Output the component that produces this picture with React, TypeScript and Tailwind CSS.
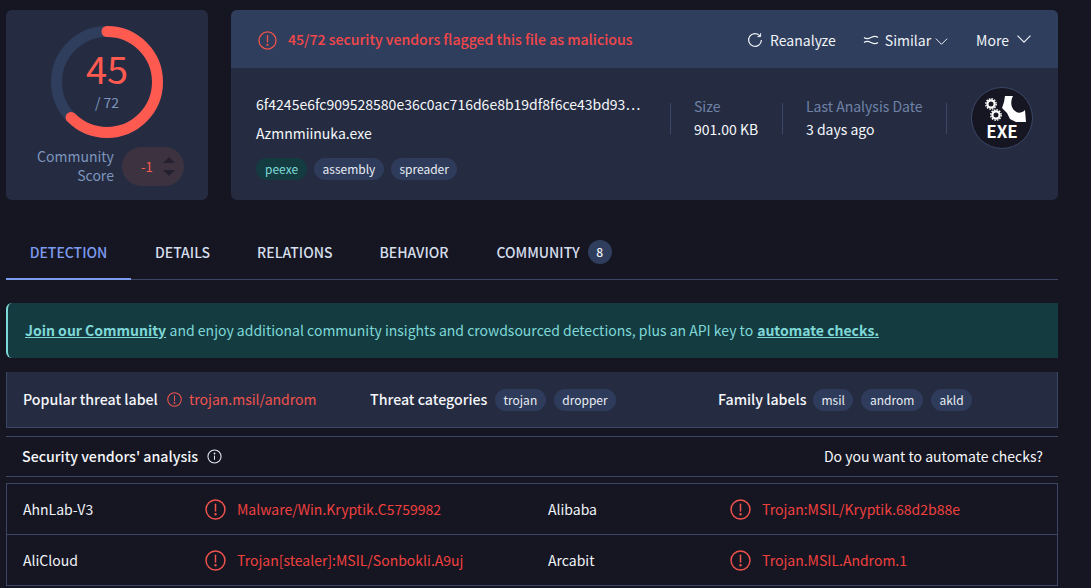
const font = { fontFamily: '"Noto Sans CJK JP", "Noto Sans", sans-serif' };

function AlertIcon({ className }: { className: string }) {
  return (
    <svg viewBox="0 0 20 20" fill="none" stroke="currentColor" strokeWidth="1.4" className={className}>
      <circle cx="10" cy="10" r="9" />
      <path d="M10 5v6.5" strokeLinecap="round" />
      <circle cx="10" cy="14.6" r="0.5" fill="currentColor" />
    </svg>
  );
}

function Chevron({ className }: { className: string }) {
  return (
    <svg viewBox="0 0 14 8" fill="none" stroke="currentColor" strokeWidth="1.1" className={className}>
      <path d="M0.5 0.7 7 7.2l6.5-6.5" />
    </svg>
  );
}

function Pill({ label, green }: { label: string; green?: boolean }) {
  return (
    <span
      className={`inline-flex h-[22px] items-center rounded-full text-[12px] leading-none ${
        green ? 'bg-[#143c40] px-[9px] text-[#7fd8d8]' : 'bg-[#2e3b5a] px-[8.5px] text-[#e8edf5]'
      }`}
    >
      {label}
    </span>
  );
}

function Gauge() {
  const r = 50.5;
  const c = 2 * Math.PI * r;
  return (
    <div className="relative mx-auto h-[112px] w-[112px]">
      <svg viewBox="0 0 112 112" className="h-[112px] w-[112px] -rotate-90">
        <circle cx="56" cy="56" r={r} fill="none" stroke="#2f3e5c" strokeWidth="11" />
        <circle
          cx="56"
          cy="56"
          r={r}
          fill="none"
          stroke="#ff5a50"
          strokeWidth="11"
          strokeLinecap="round"
          strokeDasharray={`${c * 0.625} ${c}`}
        />
      </svg>
      <div className="absolute inset-0 flex flex-col items-center">
        <span className="mt-[20px] text-[38px] leading-[44px] font-normal text-[#ff5a50]">45</span>
        <span className="mt-[3px] text-[14px] leading-[18px] text-[#7e95bd]">/ 72</span>
      </div>
    </div>
  );
}

function CommunityScore() {
  return (
    <div className="mt-[7px] flex items-center justify-center gap-2 pl-[7px]">
      <div className="text-right text-[14px] leading-[19px] text-[#7e95bd]">
        Community
        <br />
        Score
      </div>
      <div className="mt-[2px] flex h-[39px] w-[62px] items-center justify-between rounded-full bg-[#3c3240] pr-[9px] pl-[19px]">
        <span className="text-[13px] text-[#ff5a50]">-1</span>
        <div className="flex flex-col gap-[7px]">
          <div className="h-0 w-0 border-x-[6px] border-b-[6px] border-x-transparent border-b-[#252030]" />
          <div className="h-0 w-0 border-x-[6px] border-t-[6px] border-x-transparent border-t-[#252030]" />
        </div>
      </div>
    </div>
  );
}

function ExeBadge() {
  return (
    <div className="relative flex h-[62px] w-[62px] flex-col items-center rounded-full border border-[#3a4766] bg-[#161622]">
      <svg viewBox="0 0 62 62" className="absolute -inset-px h-[62px] w-[62px]" fill="none">
        <circle cx="20" cy="17" r="3.6" stroke="#fff" strokeWidth="2.2" />
        <circle cx="20" cy="17" r="5.2" stroke="#fff" strokeWidth="1.4" strokeDasharray="1.6 1.1" />
        <circle cx="25" cy="28" r="3.6" stroke="#fff" strokeWidth="2.2" />
        <circle cx="25" cy="28" r="5.2" stroke="#fff" strokeWidth="1.4" strokeDasharray="1.6 1.1" />
        <path d="M34 9h8c-3 6-2 12 2 15 3 3 7 2 10-1l1 12H45l-6-3-3-6-5-5 2-6z" fill="#fff" />
      </svg>
      <span className="mt-[34px] text-[17px] leading-[18px] font-bold text-white">EXE</span>
    </div>
  );
}

function VendorRow({ a, b, c, d }: { a: string; b: string; c: string; d: string }) {
  return (
    <div className="flex h-[51px] items-center border-b border-[#3a4766] text-[14px]">
      <span className="w-[198px] pl-4 text-[#f0f3f8]">{a}</span>
      <AlertIcon className="h-[21px] w-[21px] text-[#f0524c]" />
      <span className="ml-[11px] w-[311px] text-[#f0413f]">{b}</span>
      <span className="w-[182px] text-[#f0f3f8]">{c}</span>
      <AlertIcon className="h-[21px] w-[21px] text-[#f0524c]" />
      <span className="ml-[11px] text-[#f0413f]">{d}</span>
    </div>
  );
}

export default function App() {
  return (
    <div style={font} className="h-[588px] w-[1091px] overflow-hidden bg-[#161622] pt-[10px] pr-[33px] pl-[6px] text-white">
      <div className="flex h-[190px] gap-[23px]">
        <div className="w-[202px] rounded-md bg-[#252c42] pt-[16px]">
          <Gauge />
          <CommunityScore />
        </div>

        <div className="flex-1 overflow-hidden rounded-md bg-[#252c42]">
          <div className="flex h-[58px] items-center bg-[#2f3e5c] px-[27px] pt-[2px]">
            <AlertIcon className="h-[19px] w-[19px] text-[#f0524c]" />
            <span className="ml-[11px] text-[14.1px] font-medium text-[#f5474a]">
              45/72 security vendors flagged this file as malicious
            </span>
            <div className="ml-auto flex items-center text-[14px] text-[#f0f3f8]">
              <svg viewBox="0 0 16 16" fill="none" stroke="currentColor" strokeWidth="1.2" className="h-[16px] w-[16px]">
                <path d="M13.2 4.2A6.4 6.4 0 1 0 14.4 8" />
                <path d="M13.6 1.2v3.4h-3.2" strokeWidth="1" />
              </svg>
              <span className="ml-[7px]">Reanalyze</span>
              <svg viewBox="0 0 16 10" fill="none" stroke="currentColor" strokeWidth="1.1" className="ml-[27px] h-[10px] w-[16px]">
                <path d="M1 2.5c2 1.6 4 1.6 7 0s5-1.6 7 0M1 7.5c2-1.6 4-1.6 7 0s5 1.6 7 0" />
              </svg>
              <span className="ml-[6px]">Similar</span>
              <Chevron className="mt-[3px] ml-[4px] h-[7px] w-[13px]" />
              <span className="ml-[28px]">More</span>
              <Chevron className="mt-[-3px] ml-[8px] h-[8px] w-[14px]" />
            </div>
          </div>
          <div className="flex pr-[24px] pl-[25px]">
            <div className="w-[388px] pt-[25px]">
              <div className="overflow-hidden text-[14px] leading-[22px] whitespace-nowrap text-[#f5f7fa]">
                6f4245e6fc909528580e36c0ac716d6e8b19df8f6ce43bd93…
              </div>
              <div className="mt-[7px] text-[14px] leading-[22px] text-[#f5f7fa]">Azmnmiinuka.exe</div>
              <div className="mt-[14px] flex gap-[7px]">
                <Pill label="peexe" green />
                <Pill label="assembly" />
                <Pill label="spreader" />
              </div>
            </div>
            <div className="mt-[35px] ml-[26px] h-[31px] w-px bg-[#3a4766]" />
            <div className="ml-[23px] w-[88px] pt-[27px]">
              <div className="text-[14px] leading-[22px] text-[#6f82a6]">Size</div>
              <div className="text-[14px] leading-[24px] text-[#f5f7fa]">901.00 KB</div>
            </div>
            <div className="mt-[35px] h-[31px] w-px bg-[#3a4766]" />
            <div className="ml-[23px] w-[140px] pt-[27px]">
              <div className="text-[14px] leading-[22px] text-[#6f82a6]">Last Analysis Date</div>
              <div className="text-[14px] leading-[24px] text-[#f5f7fa]">3 days ago</div>
            </div>
            <div className="mt-[35px] h-[31px] w-px bg-[#3a4766]" />
            <div className="mt-[19px] ml-auto -translate-x-px">
              <ExeBadge />
            </div>
          </div>
        </div>
      </div>

      <div className="mt-[25px] flex h-[55px] items-stretch border-b border-[#3a4766] text-[14px] font-medium text-[#d5deec]">
        <div className="-mb-px flex w-[125px] items-center justify-center border-b-2 border-[#7c9bf0] pt-[2px] text-[#7c9bf0]">
          DETECTION
        </div>
        <div className="ml-[24px] flex items-center">DETAILS</div>
        <div className="ml-[47px] flex items-center">RELATIONS</div>
        <div className="ml-[47px] flex items-center">BEHAVIOR</div>
        <div className="ml-[48px] flex items-center">
          COMMUNITY
          <span className="ml-[8px] flex h-[24px] w-[24px] items-center justify-center rounded-full bg-[#2f3e5c] text-[12px] text-[#f0f3f8]">
            8
          </span>
        </div>
      </div>

      <div className="mt-[23px] flex h-[55px] items-center rounded-l-md border-l-2 border-[#7fd8d8] bg-[#143c40] pl-[17px] text-[14px] text-[#7fd8d8]">
        <a className="font-bold underline">Join our Community</a>
        <span className="ml-[3.5px]">and enjoy additional community insights and crowdsourced detections, plus an API key to</span>
        <a className="ml-[4px] font-bold underline">automate checks.</a>
      </div>

      <div className="mt-[14px] flex h-[56px] items-center border border-t-0 border-[#3a4766] bg-[#252c42] pl-[16px] text-[14.2px]">
        <span className="w-[134px] font-medium whitespace-nowrap text-[#f5f7fa]">Popular threat label</span>
        <AlertIcon className="ml-[10px] h-[15px] w-[15px] text-[#f0524c]" />
        <span className="ml-[7px] w-[181px] text-[14px] text-[#f0524c]">trojan.msil/androm</span>
        <span className="w-[117px] font-medium whitespace-nowrap text-[#f5f7fa]">Threat categories</span>
        <div className="ml-[8px] flex w-[223px] gap-[8px]">
          <Pill label="trojan" />
          <Pill label="dropper" />
        </div>
        <span className="w-[88px] font-medium whitespace-nowrap text-[#f5f7fa]">Family labels</span>
        <div className="ml-[7px] flex gap-[8px]">
          <Pill label="msil" />
          <Pill label="androm" />
          <Pill label="akld" />
        </div>
      </div>

      <div className="mt-[8px] flex h-[41px] items-center justify-between border-y border-[#3a4766] pr-[15px] pl-[16px] text-[14px]">
        <div className="flex items-center">
          <span className="text-[14.2px] font-medium text-[#f5f7fa]">Security vendors' analysis</span>
          <svg viewBox="0 0 16 16" fill="none" stroke="currentColor" strokeWidth="1.1" className="ml-[9px] h-[15px] w-[15px] text-[#e8edf5]">
            <circle cx="8" cy="8" r="7" />
            <path d="M8 7v4.5" />
            <circle cx="8" cy="4.8" r="0.4" fill="currentColor" />
          </svg>
        </div>
        <span className="text-[#f5f7fa]">Do you want to automate checks?</span>
      </div>

      <div className="mt-[6px] border-x border-t border-[#3a4766]">
        <VendorRow a="AhnLab-V3" b="Malware/Win.Kryptik.C5759982" c="Alibaba" d="Trojan:MSIL/Kryptik.68d2b88e" />
        <VendorRow a="AliCloud" b="Trojan[stealer]:MSIL/Sonbokli.A9uj" c="Arcabit" d="Trojan.MSIL.Androm.1" />
      </div>
    </div>
  );
}
